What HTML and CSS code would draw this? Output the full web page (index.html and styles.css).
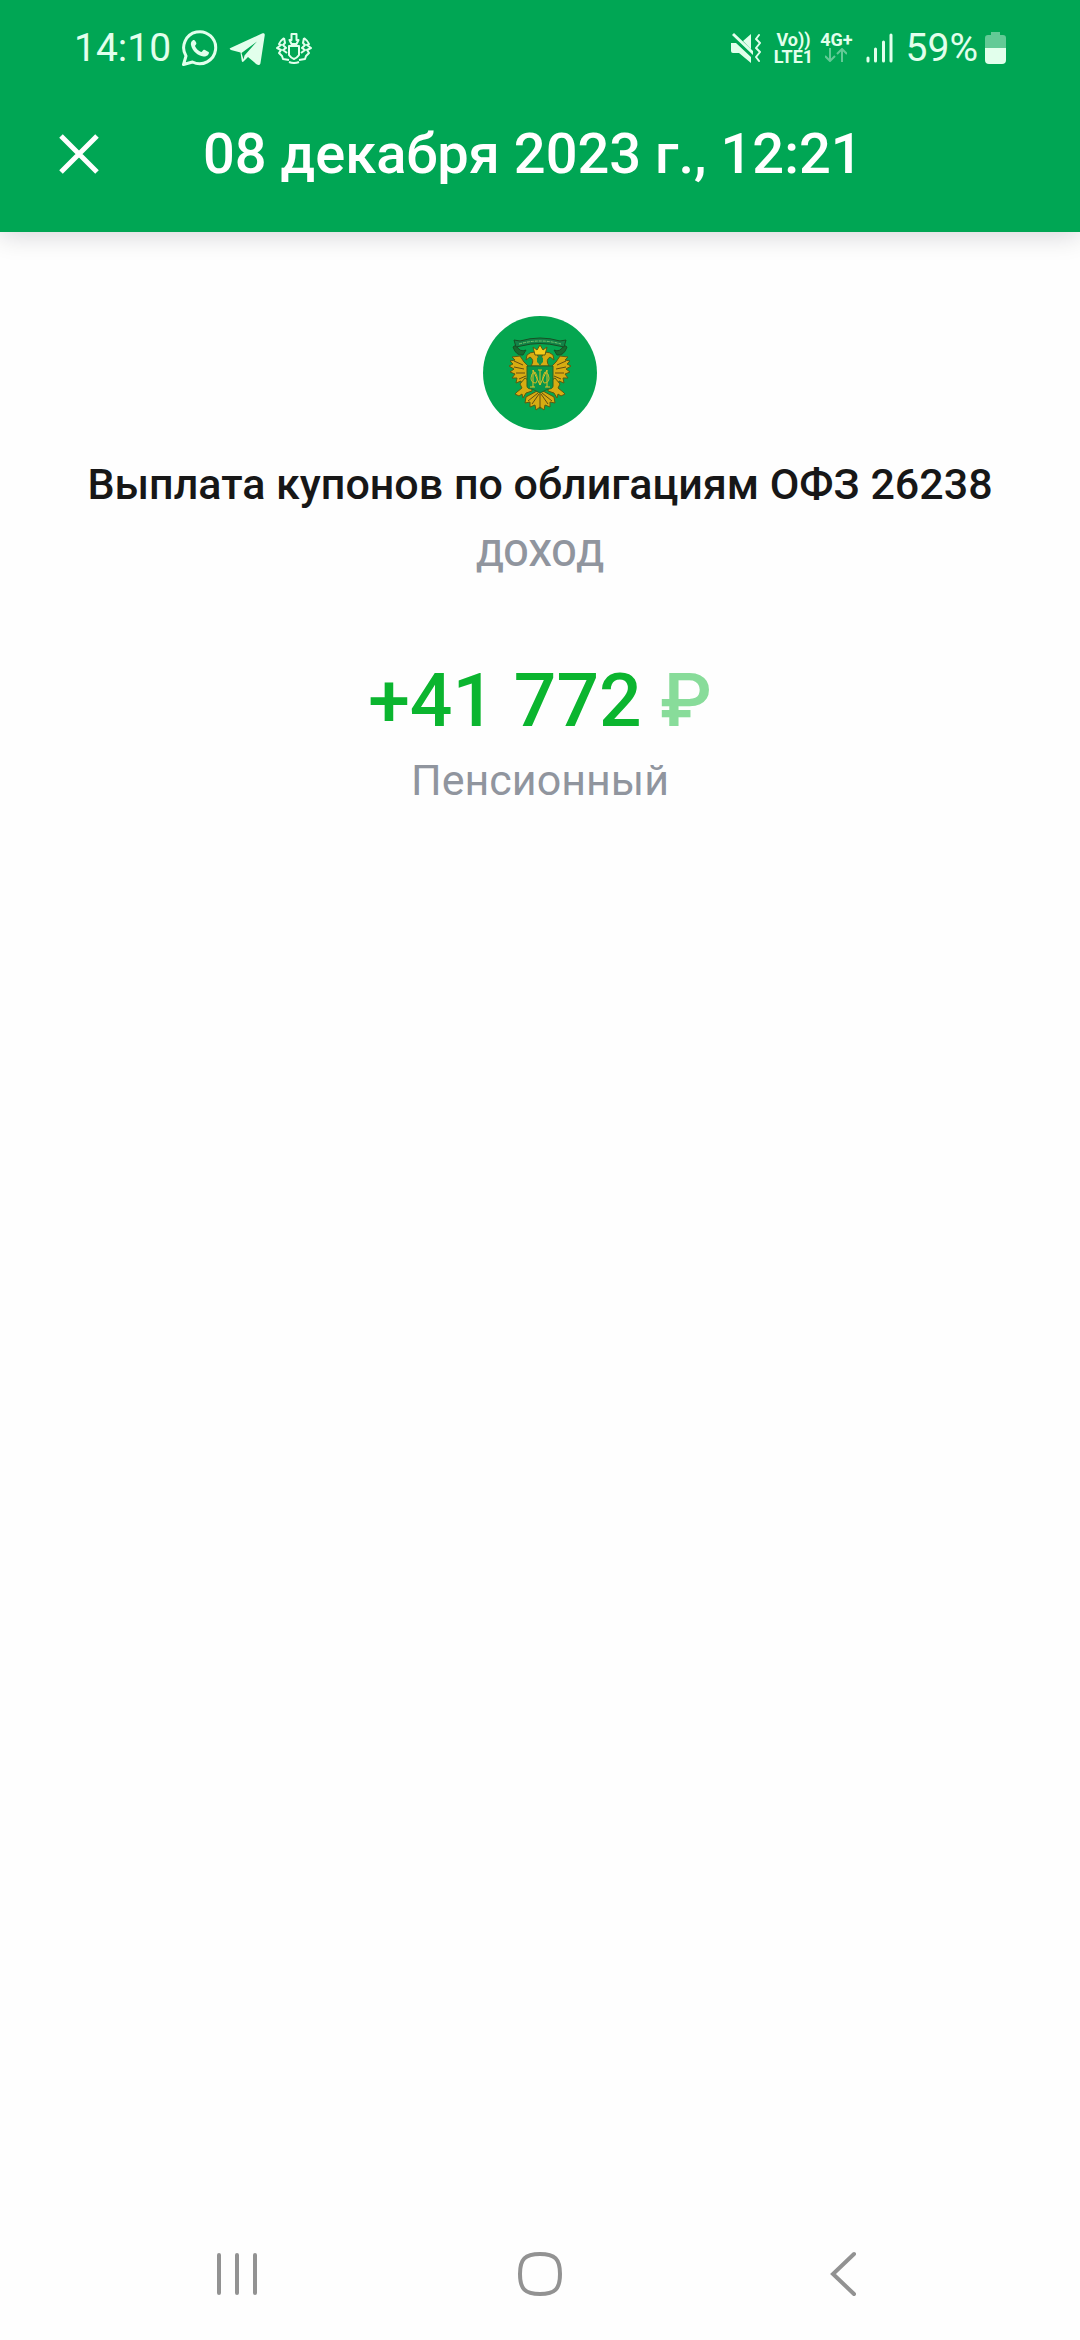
FILE: index.html
```html
<!DOCTYPE html>
<html lang="ru">
  <head>
    <meta charset="UTF-8" />
    <meta name="viewport" content="width=device-width, initial-scale=1.0" />
    <title>08 декабря 2023 г., 12:21</title>
    <link rel="stylesheet" href="styles.css">
  </head>
  <body>
    <header class="header">
      <div class="status-bar">
        <div class="status-left">
          <span class="status-text">14:10</span>
          <!-- WhatsApp -->
          <svg class="icon" width="36" height="36" viewBox="0 0 36 36">
            <path d="M1.500 34.500L4 26A16 16 0 1 1 10.500 32z" fill="none" stroke="currentColor" stroke-width="3" stroke-linejoin="round" />
            <path d="M12 10c-2 0-3.500 2.500-3 5 1.200 6 7 11 12.500 11.500 3 .2 5.500-1.500 5.500-4 0-.7-4.500-3-5.300-2.800-.8.200-1.700 2.400-2.600 2.200-2.500-.8-5-3.200-6-5.700-.3-.9 1.300-1.500 1.300-2.700 0-.8-1.400-3.500-2.400-3.500z" fill="currentColor" />
          </svg>
          <!-- Telegram -->
          <svg class="icon" width="36" height="36" viewBox="0 0 36 36">
            <path d="M1.500 18L33 3.500c2-.8 3 0 2.700 2L31.500 33c-.4 2.200-2 2.700-4 1.300L19 27l-4.500 4.500c-1 .8-1.700.3-1.800-1L11.500 22.500 2 20c-1.500-.6-1.700-1.500-.5-2z" fill="currentColor" />
            <path d="M12.500 23L28 11.500 15.500 25.500l-1 4z" fill="#00a654" />
          </svg>
          <!-- bank coat of arms -->
          <svg class="icon" width="36" height="32" viewBox="0 0 36 32" fill="none" stroke="currentColor" stroke-width="2" stroke-linejoin="round">
            <path d="M15.500 2h5v6h2l-2 4h-5l-2-4h2zM13 14h10v9q-2 3-5 4-3-1-5-4z" />
            <path d="M8 6q-4 3-5 6l2 1-4 3 4 2-2 3 3 3 1 3 6 1M8 6l1 5-2 2 3 3-3 2 4 3M28 6q4 3 5 6l-2 1 4 3-4 2 2 3-3 3-1 3-6 1M28 6l-1 5 2 2-3 3 3 2-4 3M13 30q5 2 10 0" />
          </svg>
        </div>
        <div class="status-right">
          <!-- sound off, vibrate -->
          <svg class="icon" width="30" height="30" viewBox="0 0 30 30">
            <path d="M0 10h5L20 24v6L8 20H2q-2 0-2-2zM12 8l8-7v15zM1 2L3 0l19 18v4z" fill="currentColor" />
            <path d="M28 2l-3 4 4 4-4 5 4 4-4 5 3 4" fill="none" stroke="currentColor" stroke-width="2" stroke-linecap="round" stroke-linejoin="round" />
          </svg>
          <div class="network volte"><span>Vo))</span><span>LTE1</span></div>
          <div class="network">
            <span>4G+</span>
            <svg width="22" height="14" viewBox="0 0 22 14" fill="none" stroke="#63ca96" stroke-width="2">
              <path d="M5 0v13M0 8l5 5 5-5M17 14V1M12 6l5-5 5 5" />
            </svg>
          </div>
          <svg class="icon signal" width="27" height="30" viewBox="0 0 27 30" fill="none" stroke="currentColor" stroke-width="3" stroke-linecap="round">
            <path d="M2 25v3M9.500 16v12M17.500 9v19M25 2v26" />
          </svg>
          <span class="status-text">59%</span>
          <svg class="icon" width="21" height="32" viewBox="0 0 21 32">
            <path d="M6 0h9v3h3q3 0 3 3v10H0V6q0-3 3-3h3z" fill="#63ca96" />
            <path d="M0 16h21v12q0 4-4 4H4q-4 0-4-4z" fill="currentColor" />
          </svg>
        </div>
      </div>
      <div class="toolbar">
        <button class="close" type="button" aria-label="Закрыть">
          <svg width="40" height="40" viewBox="0 0 40 40" fill="none" stroke="currentColor" stroke-width="5">
            <path d="M2 2l36 36M38 2L2 38" />
          </svg>
        </button>
        <h1 class="title">08 декабря 2023 г., 12:21</h1>
      </div>
    </header>
    <main class="operation">
      <!-- issuer emblem: two-headed eagle with a ribbon -->
      <svg class="emblem" width="114" height="114" viewBox="0 0 114 114">
        <circle cx="57" cy="57" r="57" fill="#05a650" />
        <g fill="#176c2f" stroke="#174f24">
          <path d="M33 29q4 8 10 5l-3 5q-7 1-10-8zM81 29q-4 8-10 5l3 5q7 1 10-8z" />
          <path d="M31 24l6 1q20-6 40 0l6-1-2 7-5-1q-19-5-38 0l-5 1z" fill="#138348" />
        </g>
        <path d="M36 28q21-6 42 0" fill="none" stroke="#75c76b" stroke-dasharray="3 1" />
        <g fill="#d8ac12" stroke="#5b5b12" stroke-linejoin="round">
          <path d="M48 50q4-6-1-9l-4 3 1-5q7-6 11 1l2 9 2-9q4-7 11-1l1 5-4-3q-5 3-1 9z" />
          <path d="M52 39l-2-8 4 3 3-5 3 5 4-3-2 8z" fill="#f4cd1b" />
          <path d="M45 50l-4-4-4-6-8 1 3 3-5 1 3 3-4 2 5 3-4 3 5 2-3 4 5 0-1 5 5-2 1 4 6-7M69 50l4-4 4-6 8 1-3 3 5 1-3 3 4 2-5 3 4 3-5 2 3 4-5 0 1 5-5-2-1 4-6-7" />
          <path d="M42 62l-5 6 2 4-5 4-2 2 4 2 3-2 1 4 3-5 6-2-1-9zM72 62l5 6-2 4 5 4 2 2-4 2-3-2-1 4-3-5-6-2 1-9z" />
          <path d="M54 75L43 81l-1 6 5-1 0 5 5-2 1 5 4-3 4 3 1-5 5 2 0-5 5 1-1-6-11-6z" />
        </g>
        <path d="M55 77L45 85M56 78l-7 10M57 77v16M58 78l7 10M59 77l10 8M31 45l9 4M31 51l10 2M33 57l9 0M36 63l7-3M83 45l-9 4M83 51l-10 2M81 57l-9 0M78 63l-7-3" fill="none" stroke="#634e13" />
        <path d="M54 42l3-2 3 2v4l-3 3-3-3z" fill="#159449" />
        <path d="M44 50h26v20q0 3-5 3l-8 4-8-4q-5 0-5-3z" fill="#08964a" stroke="#276326" />
        <path d="M50 71V54l7 15 7-15v17M57 54v15M47 71h5M62 71h5M55 54h4" fill="none" stroke="#e4c326" />
        <path d="M52 56q-4 1-4 6t5 5q3-5-1-11M62 56q4 1 4 6t-5 5q-3-5 1-11" fill="none" stroke="#cbbb27" />
      </svg>
      <h2 class="name">Выплата купонов по облигациям ОФЗ 26238</h2>
      <p class="kind">ДОХОД</p>
      <p class="amount">+41 772 <span class="currency">₽</span></p>
      <p class="account">Пенсионный</p>
    </main>
    <nav class="nav-bar">
      <button type="button" aria-label="Последние приложения">
        <svg width="44" height="48" viewBox="0 0 44 48" fill="none" stroke="currentColor" stroke-width="4" stroke-linecap="round">
          <path d="M4 5v38M22 5v38M40 5v38" />
        </svg>
      </button>
      <button type="button" aria-label="Главный экран">
        <svg width="48" height="48" viewBox="0 0 48 48" fill="none" stroke="currentColor" stroke-width="4">
          <path d="M24 4C39 4 44 9 44 24S39 44 24 44 4 39 4 24 9 4 24 4z" />
        </svg>
      </button>
      <button type="button" aria-label="Назад">
        <svg width="48" height="48" viewBox="0 0 48 48" fill="none" stroke="currentColor" stroke-width="4" stroke-linecap="round">
          <path d="M35 4L14 24l21 20" />
        </svg>
      </button>
    </nav>
  </body>
</html>
```
FILE: styles.css
```css
* {
  box-sizing: border-box;
}
body {
  display: flex;
  flex-direction: column;
  min-height: 100vh;
  margin: 0;
  background-color: #fefefe;
  font-family: Roboto, "Noto Sans", sans-serif;
}
svg {
  display: block;
  flex-shrink: 0;
}
h1,
h2,
p {
  margin: 0;
}
button {
  display: flex;
  align-items: center;
  justify-content: center;
  padding: 0;
  border: none;
  background: none;
  color: inherit;
  cursor: pointer;
}
.header {
  background-color: #00a654;
  color: #fff;
  box-shadow: 0 4px 24px rgba(0, 0, 30, 0.16);
}
.status-bar {
  display: flex;
  justify-content: space-between;
  height: 96px;
  padding: 0 74px;
  color: #e2ffec;
}
.status-left,
.status-right {
  display: flex;
  align-items: center;
}
.status-left {
  gap: 11px;
}
.status-right {
  gap: 7px;
}
.status-text {
  font-size: 39px;
  line-height: 48px;
}
.network {
  display: flex;
  flex-direction: column;
  align-items: center;
  height: 34px;
  font-size: 18px;
  font-weight: 700;
  line-height: 17px;
}
.volte {
  margin-left: 6px;
}
.signal {
  margin: 0 6px;
}
.toolbar {
  display: flex;
  align-items: center;
  height: 136px;
  padding: 0 59px 20px;
}
.close {
  width: 40px;
  height: 80px;
}
.title {
  margin-left: 104px;
  font-size: 56px;
  font-weight: 500;
  line-height: 72px;
}
.operation {
  display: flex;
  flex: 1;
  flex-direction: column;
  align-items: center;
  padding: 84px 40px 0;
  color: #90959e;
  text-align: center;
}
.name {
  margin-top: 28px;
  color: #171717;
  font-size: 43px;
  font-weight: 500;
  line-height: 52px;
}
.kind {
  margin-top: 20px;
  font-size: 37px;
  font-weight: 500;
  line-height: 48px;
}
.amount {
  margin-top: 78px;
  color: #0bb52f;
  font-size: 75px;
  font-weight: 500;
  line-height: 88px;
}
.currency {
  color: #88dc9a;
}
.account {
  margin-top: 10px;
  font-size: 43px;
  line-height: 52px;
}
.nav-bar {
  display: grid;
  grid-template-columns: repeat(3, 1fr);
  height: 132px;
  padding: 0 86px;
  color: #929292;
}
```
